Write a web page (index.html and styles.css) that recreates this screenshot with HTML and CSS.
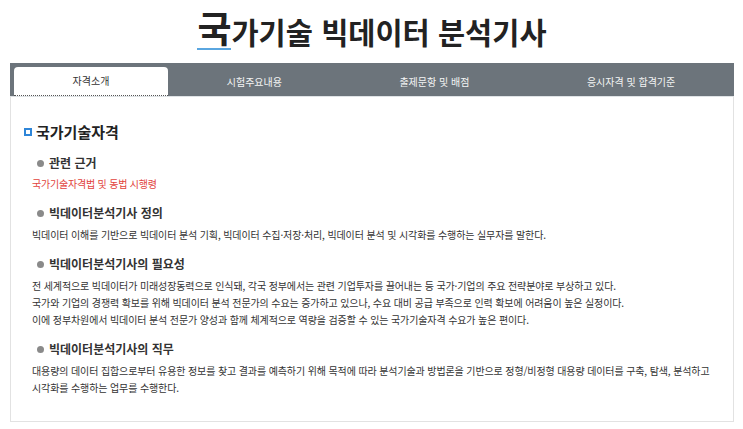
FILE: index.html
```html
<!DOCTYPE html>
<html lang="ko">
<head>
<meta charset="utf-8">
<title>국가기술 빅데이터 분석기사</title>
<link rel="stylesheet" href="styles.css">
</head>
<body>
<div class="page">
  <h1 class="title"><span class="first">국</span>가기술 빅데이터 분석기사</h1>
  <div class="tabs">
    <div class="tab active">자격소개</div>
    <div class="tab">시험주요내용</div>
    <div class="tab">출제문항 및 배점</div>
    <div class="tab">응시자격 및 합격기준</div>
  </div>
  <div class="panel">
    <h2 class="sec"><span class="sq"></span>국가기술자격</h2>
    <h3 class="sub first-sub"><span class="dot"></span>관련 근거</h3>
    <p class="red">국가기술자격법 및 동법 시행령</p>
    <h3 class="sub"><span class="dot"></span>빅데이터분석기사 정의</h3>
    <p class="txt">빅데이터 이해를 기반으로 빅데이터 분석 기획, 빅데이터 수집·저장·처리, 빅데이터 분석 및 시각화를 수행하는 실무자를 말한다.</p>
    <h3 class="sub"><span class="dot"></span>빅데이터분석기사의 필요성</h3>
    <p class="txt">전 세계적으로 빅데이터가 미래성장동력으로 인식돼, 각국 정부에서는 관련 기업투자를 끌어내는 등 국가·기업의 주요 전략분야로 부상하고 있다.<br>국가와 기업의 경쟁력 확보를 위해 빅데이터 분석 전문가의 수요는 증가하고 있으나, 수요 대비 공급 부족으로 인력 확보에 어려움이 높은 실정이다.<br>이에 정부차원에서 빅데이터 분석 전문가 양성과 함께 체계적으로 역량을 검증할 수 있는 국가기술자격 수요가 높은 편이다.</p>
    <h3 class="sub"><span class="dot"></span>빅데이터분석기사의 직무</h3>
    <p class="txt">대용량의 데이터 집합으로부터 유용한 정보를 찾고 결과를 예측하기 위해 목적에 따라 분석기술과 방법론을 기반으로 정형/비정형 대용량 데이터를 구축, 탐색, 분석하고<br>시각화를 수행하는 업무를 수행한다.</p>
  </div>
</div>
</body>
</html>
```
FILE: styles.css
```css
html, body {
  margin: 0;
  padding: 0;
  background: #fff;
}
body {
  font-family: "Noto Sans CJK KR", "Noto Sans", sans-serif;
  color: #333;
}
.page {
  padding: 0 9px 0 10px;
}
.title {
  margin: 0;
  height: 63px;
  display: flex;
  justify-content: center;
  align-items: flex-end;
  font-size: 29.5px;
  font-weight: 700;
  color: #222;
  line-height: 1;
  box-sizing: border-box;
  padding-bottom: 17px;
  letter-spacing: 0;
}
.first {
  font-size: 37px;
  border-bottom: 2px solid #5aa6e0;
  line-height: 38px;
  margin-bottom: -4px;
  padding-bottom: 2px;
}
.tabs {
  display: flex;
  background: #6c747b;
  padding: 4px 0 0 4px;
  height: 33px;
  box-sizing: border-box;
}
.tab {
  flex: 1 1 auto;
  text-align: center;
  font-size: 10px;
  color: #f4f4f4;
  line-height: 29px;
  padding: 0 12px;
}
.tab.active {
  flex: 0 0 154px;
  background: #fff;
  color: #333;
  border-radius: 4px 4px 0 0;
  border-bottom: 1px dotted #555;
  line-height: 28px;
  padding: 0;
}
.panel {
  border: 1px solid #e2e2e2;
  border-top: 1px solid #dfe3e6;
  height: 326px;
  box-sizing: border-box;
  padding: 24px 12px 0 21px;
}
.sec {
  margin: 0 0 0 -8px;
  display: flex;
  align-items: center;
  font-size: 15px;
  font-weight: 700;
  line-height: 22px;
  color: #222;
}
.sq {
  width: 4px;
  height: 4px;
  border: 2px solid #2f86d8;
  margin-right: 4px;
  flex: none;
}
.sub {
  margin: 11px 0 0 0;
  padding-left: 5px;
  display: flex;
  align-items: center;
  font-size: 12px;
  font-weight: 700;
  line-height: 20px;
  color: #333;
}
.first-sub {
  margin-top: 10px;
}
.dot {
  width: 7px;
  height: 7px;
  border-radius: 50%;
  background: #8a8a8a;
  margin-right: 5px;
  flex: none;
}
.red {
  margin: 2px 0 0 0;
  font-size: 10px;
  line-height: 17px;
  letter-spacing: -0.2px;
  color: #e2433d;
}
.txt {
  margin: 3px 0 0 0;
  font-size: 10px;
  line-height: 17px;
  letter-spacing: -0.12px;
  color: #333;
}
```
